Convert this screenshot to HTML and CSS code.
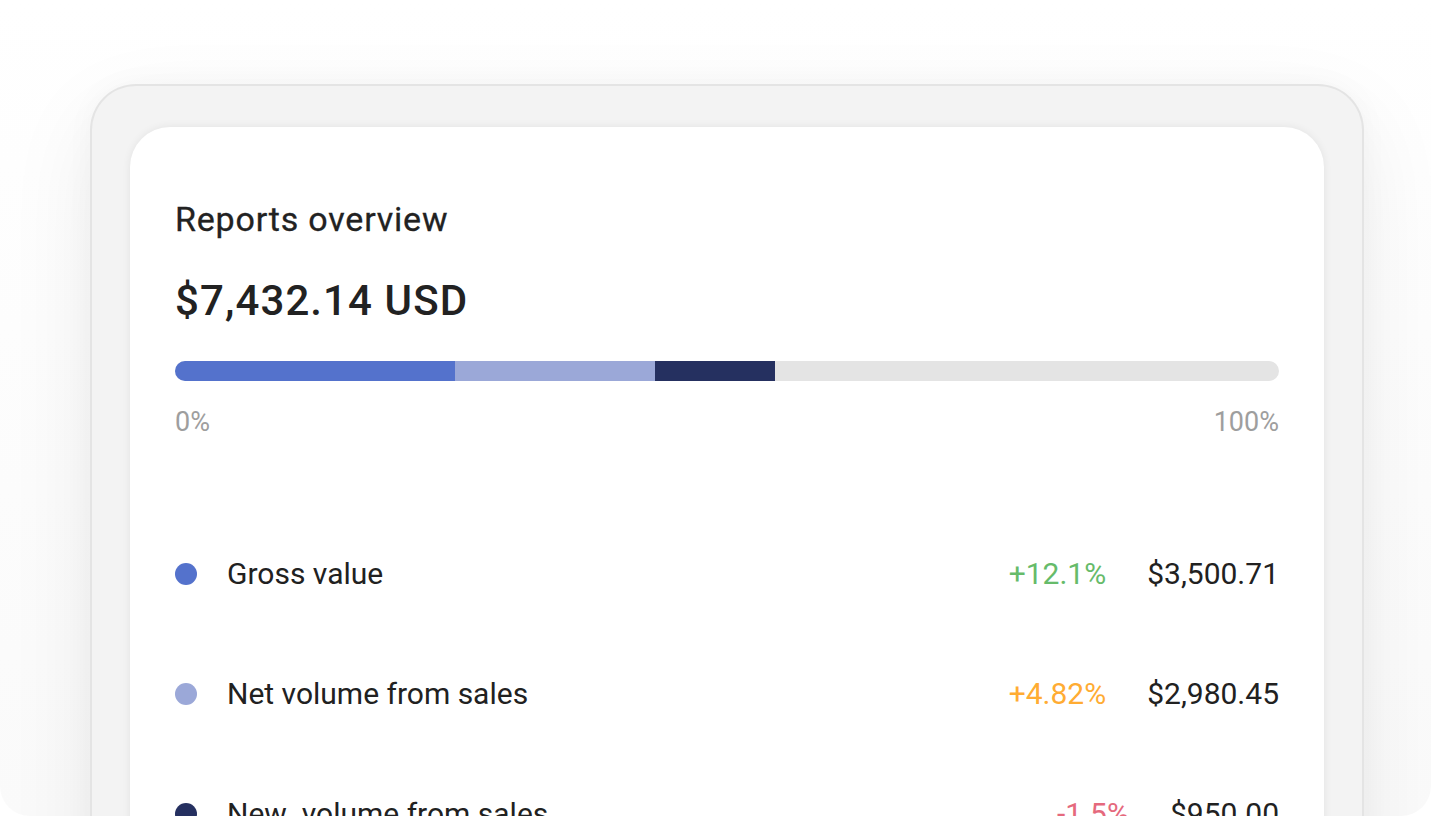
FILE: index.html
```html
<!DOCTYPE html>
<html lang="en">
<head>
<meta charset="utf-8">
<title>Reports overview</title>
<link rel="stylesheet" href="styles.css">
</head>
<body>
<div class="stage">
  <div class="frame">
    <div class="card">
      <h1 class="title">Reports overview</h1>
      <div class="total">$7,432.14 USD</div>
      <div class="bar">
        <span class="seg seg-gross" style="width:280px"></span>
        <span class="seg seg-net" style="width:200px"></span>
        <span class="seg seg-new" style="width:120px"></span>
      </div>
      <div class="scale"><span>0%</span><span>100%</span></div>
      <ul class="rows">
        <li class="row">
          <span class="dot dot-gross"></span>
          <span class="label">Gross value</span>
          <span class="pct pct-up">+12.1%</span>
          <span class="amount">$3,500.71</span>
        </li>
        <li class="row">
          <span class="dot dot-net"></span>
          <span class="label">Net volume from sales</span>
          <span class="pct pct-mid">+4.82%</span>
          <span class="amount">$2,980.45</span>
        </li>
        <li class="row">
          <span class="dot dot-new"></span>
          <span class="label">New &nbsp;volume from sales</span>
          <span class="pct pct-down">-1.5%</span>
          <span class="amount">$950.00</span>
        </li>
      </ul>
    </div>
  </div>
</div>
</body>
</html>
```

FILE: styles.css
```css
html, body {
  margin: 0;
  padding: 0;
  background: #ffffff;
}
body {
  width: 1431px;
  height: 816px;
  overflow: hidden;
  font-family: Roboto, "Liberation Sans", Arial, sans-serif;
  color: #212121;
}
.stage {
  box-sizing: border-box;
  width: 1431px;
  height: 816px;
  padding: 84px 67px 0 90px;
  overflow: hidden;
  border-radius: 0 0 30px 30px;
  background: linear-gradient(#ffffff 0%, #fdfdfd 40%, #fafafa 100%);
}
.frame {
  box-sizing: border-box;
  width: 1274px;
  height: 800px;
  border: 2px solid #e4e4e4;
  border-bottom: 0;
  border-radius: 46px 46px 0 0;
  background: #f3f3f3;
  padding: 41px 38px 0 38px;
  box-shadow: 0 30px 90px rgba(0, 0, 0, 0.07), 0 0 30px rgba(0, 0, 0, 0.03);
}
.card {
  box-sizing: border-box;
  height: 760px;
  background: #ffffff;
  border-radius: 40px 40px 0 0;
  padding: 75px 45px 0 45px;
  box-shadow: 0 0 8px rgba(0, 0, 0, 0.07);
  display: flex;
  flex-direction: column;
}
.title {
  margin: 0;
  font-size: 34px;
  line-height: 34px;
  font-weight: 400;
  letter-spacing: 0.8px;
  color: #222222;
  -webkit-text-stroke: 0.3px #222222;
}
.total {
  margin-top: 44px;
  font-size: 42px;
  line-height: 42px;
  font-weight: 500;
  letter-spacing: 1.1px;
  color: #222222;
}
.bar {
  margin-top: 39px;
  height: 20px;
  border-radius: 10px;
  background: #e4e4e4;
  display: flex;
  overflow: hidden;
}
.seg {
  display: block;
  height: 100%;
}
.seg-gross { background: #5472cc; }
.seg-net { background: #9ba8d8; }
.seg-new { background: #253060; }
.scale {
  margin-top: 28px;
  display: flex;
  justify-content: space-between;
  font-size: 27px;
  line-height: 27px;
  color: #9e9e9e;
}
.rows {
  list-style: none;
  margin: 123px 0 0 0;
  padding: 0;
  display: flex;
  flex-direction: column;
  gap: 90px;
}
.row {
  display: flex;
  align-items: center;
  height: 30px;
  font-size: 30px;
  line-height: 30px;
}
.dot {
  width: 22px;
  height: 22px;
  border-radius: 50%;
  flex: none;
  margin-right: 30px;
}
.dot-gross { background: #5472cc; }
.dot-net { background: #9ba8d8; }
.dot-new { background: #253060; }
.label {
  flex: 1;
  white-space: pre;
}
.pct { text-align: right; }
.pct-up { color: #66bb6a; }
.pct-mid { color: #ffac33; }
.pct-down { color: #e5697d; }
.amount {
  margin-left: 41px;
  text-align: right;
}
```
